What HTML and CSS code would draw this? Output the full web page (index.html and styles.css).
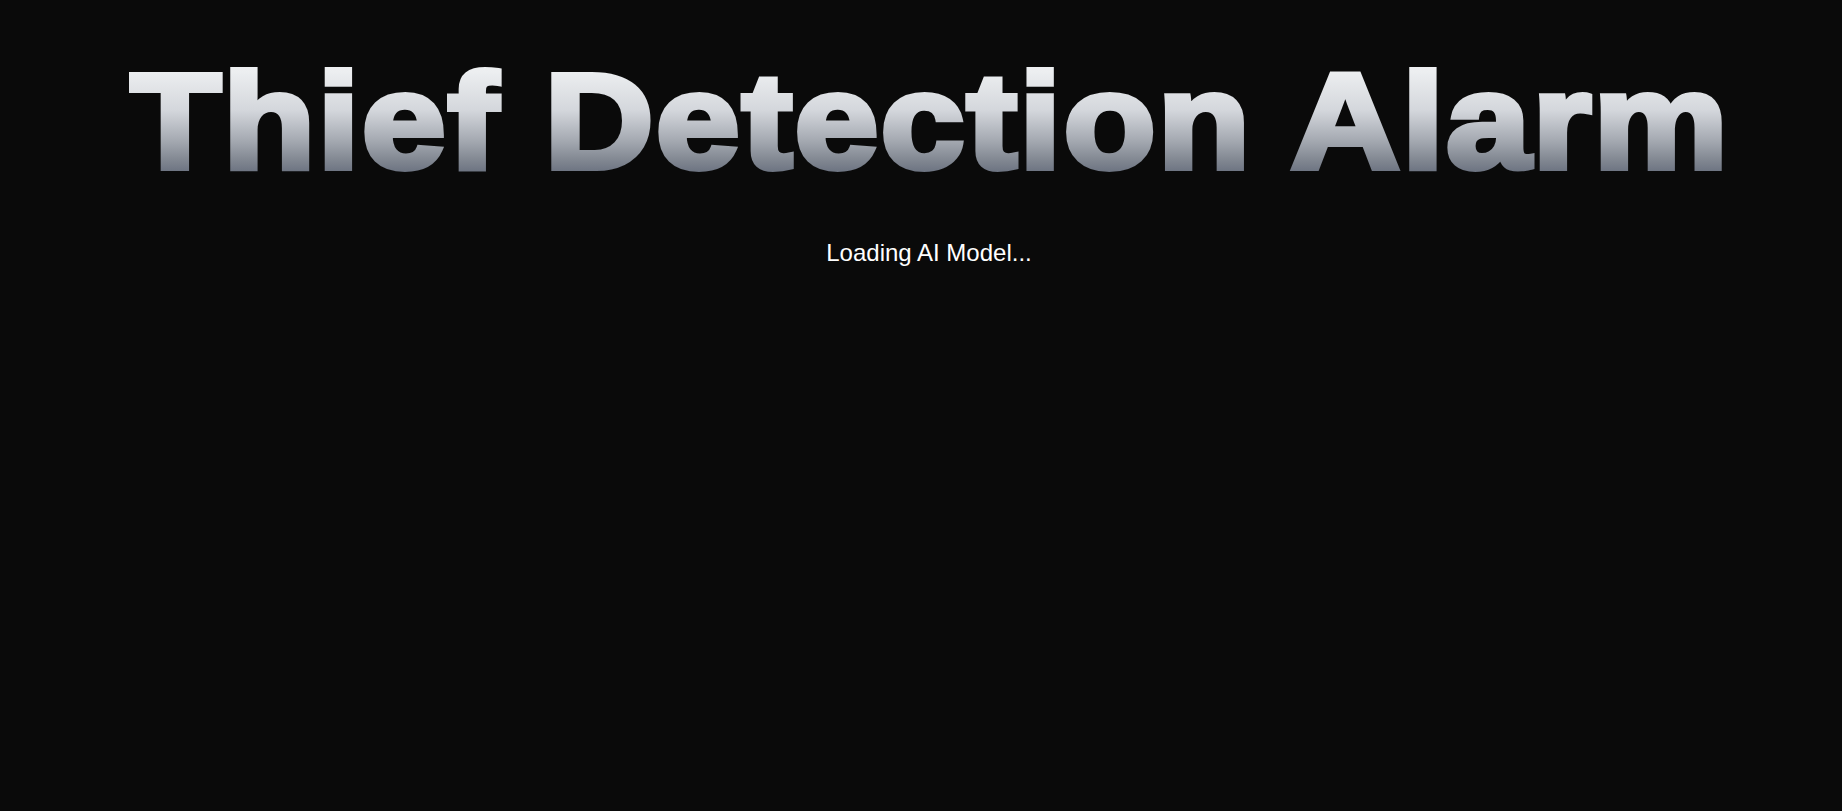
FILE: index.html
```html
<!DOCTYPE html>
<html lang="en">
<head>
<meta charset="utf-8">
<title>Thief Detection Alarm</title>
<link rel="stylesheet" href="styles.css">
</head>
<body>
<main class="app">
  <h1 class="title">Thief Detection Alarm</h1>
  <p class="status">Loading AI Model...</p>
</main>
</body>
</html>
```
FILE: styles.css
```css
html, body {
  margin: 0;
  padding: 0;
  background: #0a0a0a;
  min-height: 100vh;
}
.app {
  display: flex;
  flex-direction: column;
  align-items: center;
  padding: 53px 0 0 16px;
  font-family: "Liberation Sans", Arial, sans-serif;
}
.title {
  margin: 0;
  font-size: 136px;
  font-weight: 700;
  letter-spacing: 2px;
  line-height: 1;
  white-space: nowrap;
  transform: scaleX(1.11);
  background: linear-gradient(180deg, #f3f4f6 0%, #eceef0 14%, #d4d7dc 42%, #a3a8b0 65%, #838993 78%, #6b7280 88%, #5f6570 100%);
  -webkit-background-clip: text;
  background-clip: text;
  color: transparent;
  -webkit-text-stroke: 6px transparent;
}
.status {
  margin: 50px 0 0;
  font-size: 24px;
  line-height: normal;
  color: #ffffff;
}
```
